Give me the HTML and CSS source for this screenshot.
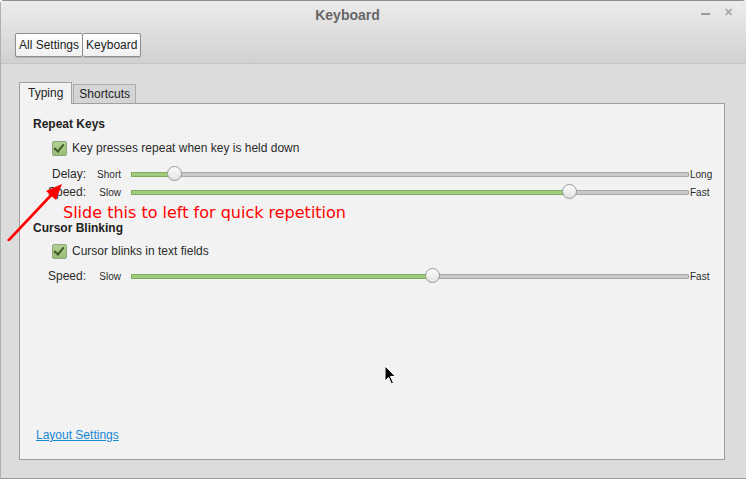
FILE: index.html
```html
<!DOCTYPE html>
<html lang="en">
<head>
    <meta charset="UTF-8">
    <title>Keyboard</title>
    <link rel="stylesheet" href="styles.css">
</head>
<body>
    <div class="window">
        <div class="titlebar">
            <div class="title-row">
                <span class="title">Keyboard</span>
                <div class="wm-buttons">
                    <span class="wm-min"></span>
                    <span class="wm-close">&#x2715;</span>
                </div>
            </div>
            <div class="crumbs">
                <button class="crumb">All Settings</button><button class="crumb">Keyboard</button>
            </div>
        </div>

        <div class="content">
            <div class="tabs">
                <div class="tab active">Typing</div>
                <div class="tab">Shortcuts</div>
            </div>
            <div class="panel">
                <h3 class="section">Repeat Keys</h3>
                <label class="check"><span class="box"></span>Key presses repeat when key is held down</label>
                <div class="slider-row first">
                    <span class="label">Delay:</span>
                    <span class="min">Short</span>
                    <div class="track" style="--v: 7.7%"><div class="fill"></div><div class="thumb"></div></div>
                    <span class="max">Long</span>
                </div>
                <div class="slider-row">
                    <span class="label">Speed:</span>
                    <span class="min">Slow</span>
                    <div class="track" style="--v: 78.8%"><div class="fill"></div><div class="thumb"></div></div>
                    <span class="max">Fast</span>
                </div>

                <h3 class="section second">Cursor Blinking</h3>
                <label class="check tight"><span class="box"></span>Cursor blinks in text fields</label>
                <div class="slider-row first tight">
                    <span class="label">Speed:</span>
                    <span class="min">Slow</span>
                    <div class="track" style="--v: 54.2%"><div class="fill"></div><div class="thumb"></div></div>
                    <span class="max">Fast</span>
                </div>

                <a class="link" href="#">Layout Settings</a>
            </div>
        </div>

        <div class="note">Slide this to left for quick repetition</div>
        <svg class="arrow" width="80" height="70" viewBox="0 0 80 70">
            <line x1="7" y1="70" x2="54" y2="20" stroke="#f00" stroke-width="2.6"/>
            <polygon points="61,13 45,20 55,29" fill="#f00"/>
        </svg>
        <svg class="pointer" width="14" height="22" viewBox="0 0 14 22">
            <path d="M1 1 L1 16 L4.5 12.5 L7.5 19 L9.5 18 L6.5 11.5 L11.5 11.5 Z" fill="#000" stroke="#fff" stroke-width="1"/>
        </svg>
    </div>
</body>
</html>
```

FILE: styles.css
```css
body {
    margin: 0;
    font-family: "Liberation Sans", Arial, sans-serif;
    font-size: 12px;
    color: #2b2b2b;
}
.window {
    position: relative;
    height: 479px;
    box-sizing: border-box;
    display: flex;
    flex-direction: column;
    background: #dcdcdc;
    border-top: 1px solid #8e8e8e;
    border-bottom: 1px solid #9a9a9a;
    border-left: 1px solid #b0b0b0;
    border-top-left-radius: 4px;
    border-top-right-radius: 4px;
}
.titlebar {
    height: 62px;
    background: linear-gradient(#ececec, #d1d1d1);
    border-bottom: 1px solid #c6c6c6;
}
.title-row {
    height: 29px;
    display: flex;
    align-items: center;
    justify-content: center;
    position: relative;
}
.title {
    font-weight: bold;
    font-size: 14px;
    color: #666;
    margin-top: -2px;
    margin-left: -52px;
}
.wm-buttons {
    position: absolute;
    right: 13px;
    top: 5px;
    display: flex;
    gap: 14px;
    align-items: center;
}
.wm-min {
    width: 9px;
    height: 2px;
    background: #9a9a9a;
    margin-top: 2px;
}
.wm-close {
    font-size: 11px;
    font-weight: bold;
    color: #a8a8a8;
}
.crumbs {
    display: flex;
    padding-left: 14px;
    margin-top: 3px;
}
.crumb {
    font-family: inherit;
    font-size: 12px;
    color: #222;
    height: 24px;
    padding: 0 3px;
    background: linear-gradient(#ffffff, #f0f0f0);
    border: 1px solid #8e8e8e;
    border-radius: 2px;
    box-shadow: 0 1px 1px rgba(0, 0, 0, 0.15);
}
.crumb + .crumb {
    border-left: none;
}
.content {
    flex: 1;
    display: flex;
    flex-direction: column;
    padding: 18px 21px 18px 18px;
}
.tabs {
    display: flex;
    align-items: flex-end;
    height: 21px;
}
.tab {
    height: 18px;
    line-height: 18px;
    padding: 0 5px;
    background: #d5d5d5;
    border: 1px solid #ababab;
    border-bottom: none;
    margin-left: 1px;
    color: #222;
}
.tab.active {
    height: 21px;
    line-height: 20px;
    background: #f2f2f2;
    border-color: #a0a0a0;
    margin-left: 0;
    position: relative;
    z-index: 1;
    margin-bottom: -1px;
    padding: 0 8px;
}
.panel {
    flex: 1;
    display: flex;
    flex-direction: column;
    background: #f2f2f2;
    border: 1px solid #a0a0a0;
    padding: 12px 13px 16px 13px;
}
.section {
    margin: 0;
    font-size: 12px;
    font-weight: bold;
    line-height: 16px;
    color: #222;
}
.section.second {
    margin-top: 19px;
}
.check {
    display: flex;
    align-items: center;
    gap: 5px;
    height: 18px;
    margin: 7px 0 0 19px;
}
.check.tight {
    margin-top: 6px;
}
.box {
    width: 13px;
    height: 13px;
    border: 1px solid #8fa47c;
    border-radius: 2px;
    background: linear-gradient(#b4d196, #98be76);
    position: relative;
}
.box::after {
    content: "";
    position: absolute;
    left: 3px;
    top: 0;
    width: 4px;
    height: 8px;
    border: solid #3c5c28;
    border-width: 0 2px 2px 0;
    transform: rotate(40deg);
}
.slider-row {
    display: grid;
    grid-template-columns: 53px 45px 1fr 22px;
    align-items: center;
    height: 18px;
}
.slider-row.first {
    margin-top: 8px;
}
.slider-row.tight {
    margin-top: 7px;
}
.label {
    text-align: right;
}
.min {
    font-size: 10px;
    text-align: right;
    padding-right: 10px;
}
.max {
    font-size: 10px;
    padding-left: 1px;
    white-space: nowrap;
}
.track {
    position: relative;
    height: 5px;
    box-sizing: border-box;
    background: #c9c9c9;
    border: 1px solid #a9a9a9;
    border-radius: 1px;
}
.fill {
    position: absolute;
    left: -1px;
    top: -1px;
    bottom: -1px;
    width: var(--v);
    background: #a2cb82;
    border: 1px solid #7faf5c;
    box-sizing: border-box;
}
.thumb {
    position: absolute;
    left: var(--v);
    top: 50%;
    width: 15px;
    height: 15px;
    margin: -8px 0 0 -8px;
    border-radius: 50%;
    border: 1px solid #9a9a9a;
    background: linear-gradient(#fdfdfd, #e2e2e2);
    box-sizing: border-box;
}
.link {
    margin-top: auto;
    margin-left: 3px;
    color: #1586d2;
    line-height: 16px;
}
.note {
    position: absolute;
    left: 62px;
    top: 202px;
    font-family: "DejaVu Sans", sans-serif;
    font-size: 16px;
    color: #f00;
}
.arrow {
    position: absolute;
    left: 0;
    top: 170px;
}
.pointer {
    position: absolute;
    left: 383px;
    top: 364px;
}
```
